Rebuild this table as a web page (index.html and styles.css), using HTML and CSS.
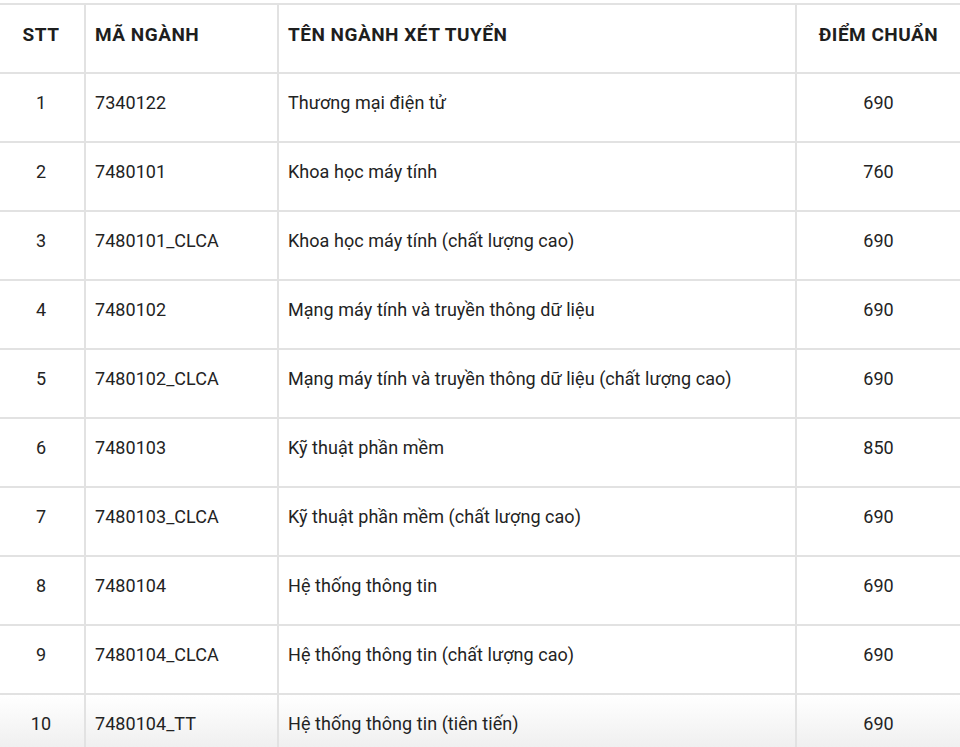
FILE: index.html
```html
<!DOCTYPE html>
<html lang="vi">
<head>
<meta charset="utf-8">
<title>Điểm chuẩn</title>
<link rel="stylesheet" href="styles.css">
</head>
<body>
<div class="wrap">
<table class="scores">
  <colgroup>
    <col class="c-stt"><col class="c-code"><col class="c-name"><col class="c-score">
  </colgroup>
  <thead>
    <tr><th class="center">STT</th><th>MÃ NGÀNH</th><th>TÊN NGÀNH XÉT TUYỂN</th><th class="center">ĐIỂM CHUẨN</th></tr>
  </thead>
  <tbody>
    <tr><td class="center">1</td><td>7340122</td><td>Thương mại điện tử</td><td class="center">690</td></tr>
    <tr><td class="center">2</td><td>7480101</td><td>Khoa học máy tính</td><td class="center">760</td></tr>
    <tr><td class="center">3</td><td>7480101_CLCA</td><td>Khoa học máy tính (chất lượng cao)</td><td class="center">690</td></tr>
    <tr><td class="center">4</td><td>7480102</td><td>Mạng máy tính và truyền thông dữ liệu</td><td class="center">690</td></tr>
    <tr><td class="center">5</td><td>7480102_CLCA</td><td>Mạng máy tính và truyền thông dữ liệu (chất lượng cao)</td><td class="center">690</td></tr>
    <tr><td class="center">6</td><td>7480103</td><td>Kỹ thuật phần mềm</td><td class="center">850</td></tr>
    <tr><td class="center">7</td><td>7480103_CLCA</td><td>Kỹ thuật phần mềm (chất lượng cao)</td><td class="center">690</td></tr>
    <tr><td class="center">8</td><td>7480104</td><td>Hệ thống thông tin</td><td class="center">690</td></tr>
    <tr><td class="center">9</td><td>7480104_CLCA</td><td>Hệ thống thông tin (chất lượng cao)</td><td class="center">690</td></tr>
    <tr class="last"><td class="center">10</td><td>7480104_TT</td><td>Hệ thống thông tin (tiên tiến)</td><td class="center">690</td></tr>
  </tbody>
</table>
</div>
</body>
</html>
```

FILE: styles.css
```css
html, body {
  margin: 0;
  padding: 0;
  background: #fff;
  overflow: hidden;
}
body {
  font-family: Roboto, "Liberation Sans", Arial, sans-serif;
  color: #222;
}
.wrap {
  height: 747px;
  overflow: hidden;
  padding-top: 3px;
  box-sizing: border-box;
}
.scores {
  border-collapse: collapse;
  width: 964px;
  margin-left: -4px;
  table-layout: fixed;
}
.c-stt { width: 88px; }
.c-code { width: 193px; }
.c-name { width: 518px; }
.c-score { width: 165px; }
.scores th, .scores td {
  border: 2px solid #e2e2e2;
  text-align: left;
  padding: 17px 9px 26px 9px;
  line-height: 24px;
  font-size: 18px;
  vertical-align: middle;
}
.scores th {
  font-weight: 700;
  color: #1e1e1e;
  font-size: 19px;
  letter-spacing: 0.5px;
  padding-top: 18px;
  padding-bottom: 25px;
}
.scores td {
  font-weight: 400;
  color: #232323;
  letter-spacing: 0.05px;
}
.scores .center { text-align: center; }
.scores .last td {
  background: linear-gradient(to bottom, #ffffff 0%, #f0f0f0 75%, #ebebeb 100%);
}
```
